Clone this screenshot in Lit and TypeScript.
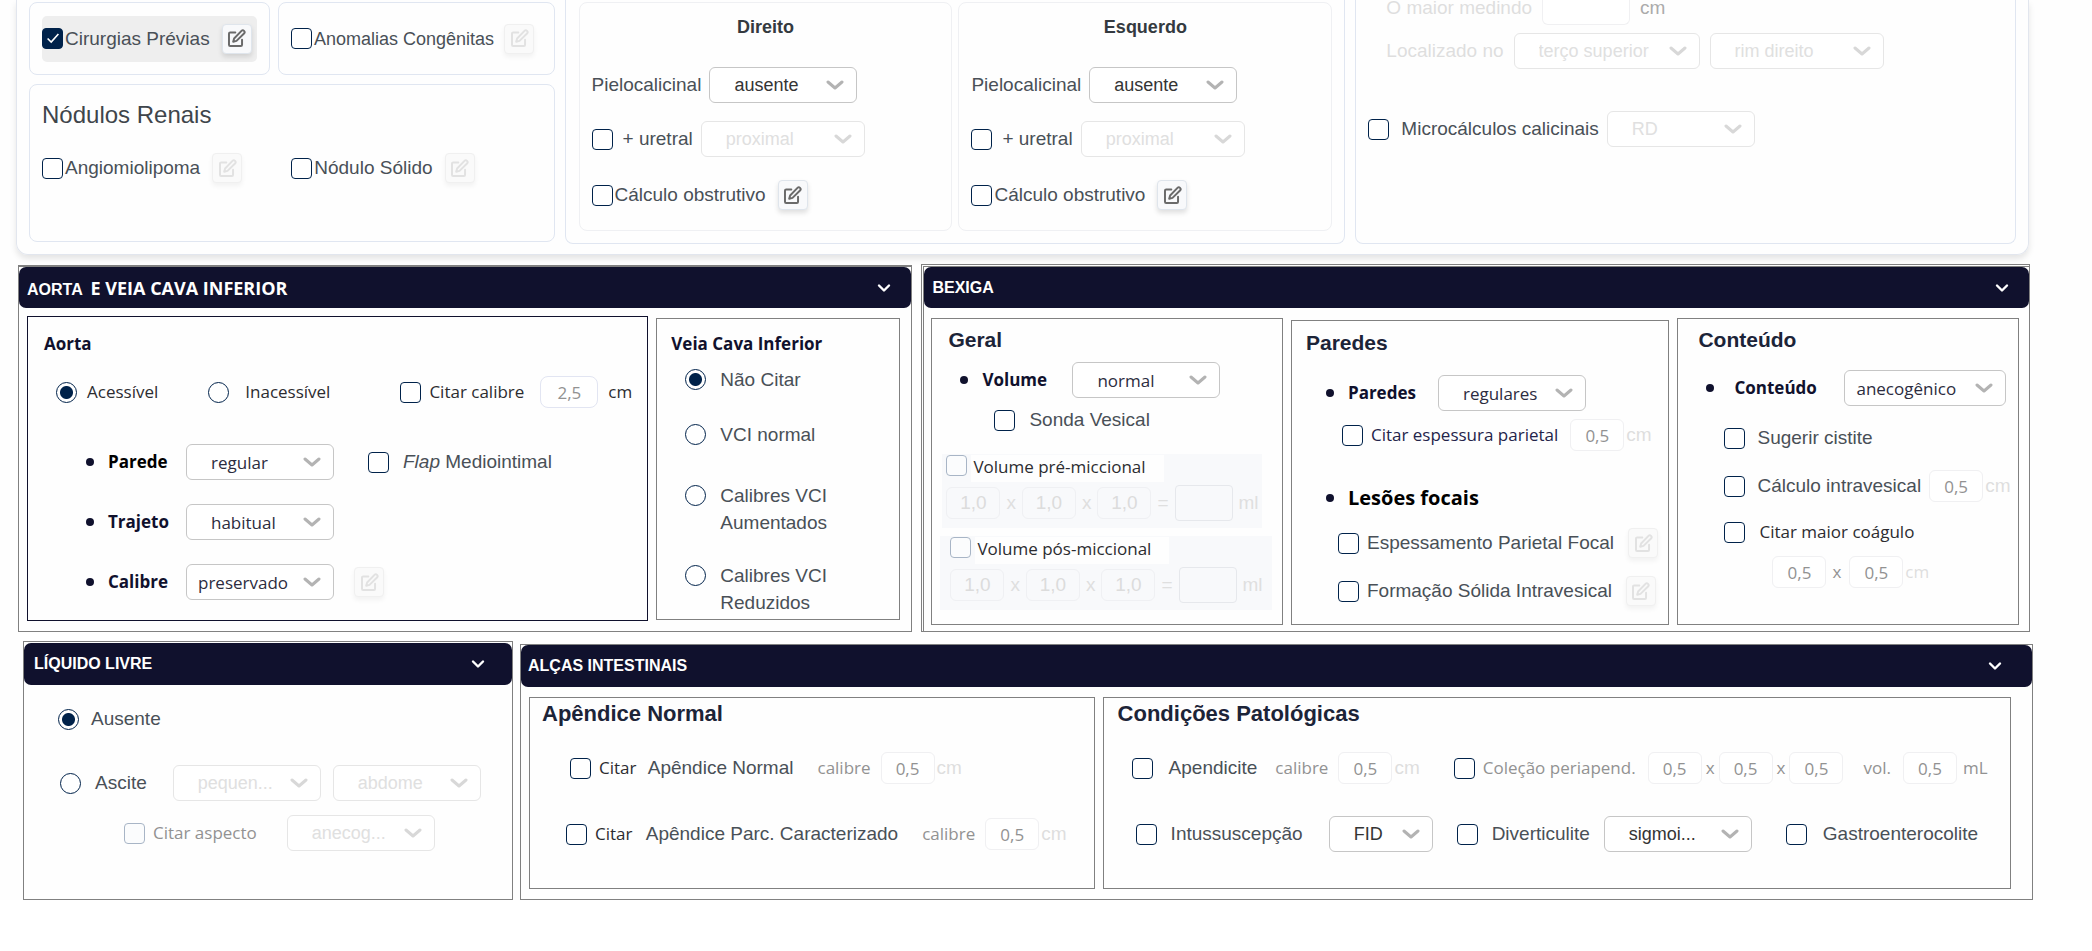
import { LitElement, html, css, svg, unsafeCSS } from "lit";
import { customElement } from "lit/decorators.js";

const steps = Array.from({ length: 50 }, (_, i) => (i + 1) * 2);
const spacing = unsafeCSS(
  steps.map((n) => `.ml-${n}{margin-left:${n}px}.mt-${n}{margin-top:${n}px}`).join("")
);

const check = (text: unknown, gap = 2, opts: { on?: boolean; off?: boolean; cls?: string } = {}) => html`
  <label class="check ${opts.cls ?? ""}">
    <input type="checkbox" ?checked=${opts.on} ?disabled=${opts.off} />
    <span class="ml-${gap}">${text}</span>
  </label>`;

const radio = (name: string, text: unknown, gap: number, on = false, cls = "") => html`
  <label class="check ${cls}">
    <input type="radio" name=${name} ?checked=${on} />
    <span class="ml-${gap}">${text}</span>
  </label>`;

const select = (value: string, label: string, cls = "", off = false) => html`
  <span class="select ${cls} ${off ? "off" : ""}">
    <select aria-label=${label} ?disabled=${off}>
      <option>${value}</option>
    </select>
    <svg viewBox="0 0 18 10" aria-hidden="true">${svg`<path d="M2 2l7 6 7-6" />`}</svg>
  </span>`;

const num = (value: string, label: string, cls = "") => html`
  <input class="num ${cls}" type="text" inputmode="decimal" aria-label=${label} .value=${value} />`;

const edit = (label: string, cls = "", off = false) => html`
  <button class="edit ${cls}" type="button" aria-label="Editar ${label}" ?disabled=${off}>
    <svg viewBox="0 0 24 24" aria-hidden="true">
      <path d="M10.5 4.5H4a1.500 1.500 0 0 0-1.500 1.500V20A1.500 1.500 0 0 0 4 21.500h13.500A1.500 1.500 0 0 0 19 20v-6.500" />
      <path d="M18.300 2.400a2.100 2.100 0 0 1 3.200 3.200L12 15l-4.200 1.200L9 12z" />
    </svg>
  </button>`;

const header = (title: unknown) => html`
  <button class="bar" type="button" aria-expanded="true">
    <span>${title}</span>
    <svg viewBox="0 0 14 10" aria-hidden="true"><path d="M2 2.500l5 5 5-5" /></svg>
  </button>`;

@customElement("app-root")
export class AppRoot extends LitElement {
  static styles = [
    css`
      :host {
        display: block;
        background: #fefefe;
        font: 19px/22px "Liberation Sans", Arial, sans-serif;
        color: #495057;
        --navy: #10112d;
        --human: "Open Sans", "Noto Sans", sans-serif;
      }
      * { box-sizing: border-box; }
      h2, h3, p { margin: 0; }
      .row { display: flex; align-items: center; height: 36px; white-space: nowrap; }
      .row.low { height: 32px; }
      .row.line { height: 20px; }
      .check { display: inline-flex; align-items: center; white-space: nowrap; }
      .human { font-family: var(--human); font-size: 17px; color: #2c2c30; }
      .ink { color: #24244a; }
      .small { font-size: 18px; }
      .gray { color: #929292; }
      .faint { color: #dedede; }

      input[type="checkbox"], input[type="radio"] {
        appearance: none;
        flex: none;
        width: 21px;
        height: 21px;
        margin: 0;
        border: 1px solid #00224a;
        border-radius: 4px;
        background: #fff;
      }
      input[type="checkbox"]:checked {
        background: #00224a url("data:image/svg+xml,%3Csvg xmlns='http://www.w3.org/2000/svg' viewBox='0 0 20 20' fill='none' stroke='white' stroke-width='1.8'%3E%3Cpath d='M4 9.500l4 4 8-9'/%3E%3C/svg%3E") center / 18px no-repeat;
      }
      input[type="checkbox"]:disabled { border-color: #a8b5c6; background: #fbfcfd; }
      input[type="radio"] { border-radius: 50%; }
      input[type="radio"]:checked {
        background: radial-gradient(circle, #00224a 0 6px, #fff 7px);
      }

      .select { display: inline-grid; align-items: center; flex: none; width: 148px; height: 36px; }
      .select > * { grid-area: 1 / 1; }
      .select select {
        appearance: none;
        width: 100%;
        height: 100%;
        padding: 0 34px 0 24px;
        border: 1px solid #c6c6c6;
        border-radius: 6px;
        background: #fff;
        font: 18px "Liberation Sans", Arial, sans-serif;
        color: #343434;
        opacity: 1;
      }
      .select svg {
        justify-self: end;
        width: 18px;
        height: 10px;
        margin-right: 13px;
        fill: none;
        stroke: #b3b3b3;
        stroke-width: 3;
        stroke-linecap: round;
        stroke-linejoin: round;
        pointer-events: none;
      }
      .select.human select { font: 17px var(--human); color: #2c2c40; }
      .select.tight select { padding-left: 11px; }
      .select.off select { border-color: #e6e6e6; color: #e0e0e0; }
      .select.off svg { stroke: #d8d8d8; }
      .select.w104 { width: 104px; }
      .select.w162 { width: 162px; }
      .select.w164 { width: 164px; }
      .select.w174 { width: 174px; }
      .select.w186 { width: 186px; }

      .num {
        flex: none;
        width: 54px;
        height: 32px;
        padding: 0;
        border: 1px solid #f0f0f2;
        border-radius: 6px;
        background: #fff;
        text-align: center;
        font: 17px var(--human);
        color: #929292;
      }
      .num.blue { width: 58px; border-color: #e2e5f2; border-radius: 8px; }
      .num.plain { font: 19px "Liberation Sans", Arial, sans-serif; }

      .edit {
        display: grid;
        place-items: center;
        flex: none;
        width: 30px;
        height: 30px;
        padding: 0;
        border: 1px solid #dfe5ec;
        border-radius: 4px;
        background: #f8f9fb;
        box-shadow: 0 3px 5px rgba(0, 0, 0, 0.12);
      }
      .edit svg {
        width: 19px;
        height: 19px;
        fill: none;
        stroke: #6a6a6a;
        stroke-width: 2.5;
        stroke-linecap: round;
        stroke-linejoin: round;
      }
      .edit:disabled { border-color: #f0f0f0; background: #fafafa; box-shadow: 0 3px 5px rgba(0, 0, 0, 0.05); }
      .edit:disabled svg { stroke: #e2e2e2; }

      /* kidneys */
      .kidneys {
        display: grid;
        grid-template-columns: 525fr 780fr 660fr;
        gap: 10px;
        margin: 0 63px 0 16px;
        padding: 0 12px 10px;
        border: 1px solid #e2e6ee;
        border-top: 0;
        border-radius: 0 0 12px 12px;
        box-shadow: 0 4px 6px rgba(0, 0, 0, 0.1);
      }
      .card { border: 1px solid #e0e6f1; border-radius: 8px; }
      .left { display: flex; flex-direction: column; gap: 9px; padding: 2px 0; }
      .pair { display: grid; grid-template-columns: 241fr 277fr; gap: 8px; }
      .pair .card { display: flex; align-items: center; height: 73px; padding: 0 12px; }
      .picked {
        display: flex;
        align-items: center;
        width: 215px;
        height: 46px;
        border-radius: 5px;
        background: #eee;
      }
      .nodules { flex: 1; padding: 17px 12px 0; }
      .nodules h3 { font-size: 24px; line-height: 26px; font-weight: 400; color: #3f454b; }
      .nodules .row { display: grid; grid-template-columns: 249fr 250fr; }
      .nodules .row > span { display: flex; align-items: center; }
      .open { border-top: 0; border-radius: 0 0 8px 8px; }
      .sides {
        display: grid;
        grid-template-columns: 1fr 1fr;
        gap: 6px;
        padding: 2px 12px 12px 13px;
      }
      .side { padding: 12px 12px 17px; border: 1px solid #eff0f3; border-radius: 8px; }
      .side h3 { font-size: 18px; line-height: 24px; text-align: center; color: #343a40; }
      .first { height: 25px; align-items: flex-start; line-height: 16px; }
      .first .num { width: 88px; height: 25px; border-top: 0; border-radius: 0 0 6px 6px; }
      .first .unit { color: #ababab; }

      /* panels */
      .band { display: grid; }
      .vessels-band { grid-template-columns: 894fr 1108fr; gap: 9px; margin: 9px 62px 0 18px; }
      .bowel-band { grid-template-columns: 490fr 1513fr; gap: 7px; margin: 9px 59px 50px 23px; }
      .panel { display: flex; flex-direction: column; border: 1px solid #808080; }
      .vessels { margin-top: 1px; border-top-width: 2px; }
      .bladder { border-top: 3px double #808080; border-left: 3px double #808080; }
      .fluid { padding-top: 1px; }
      .bowel { margin-top: 3px; }
      .bar {
        display: flex;
        align-items: center;
        justify-content: space-between;
        height: 42px;
        padding: 0 20px 0 8px;
        border: 0;
        border-radius: 7px;
        background: var(--navy);
        color: #fff;
        font: bold 16px "Liberation Sans", Arial, sans-serif;
      }
      .vessels-band .bar { height: 41px; }
      .fluid .bar { padding: 0 27px 0 10px; }
      .bowel .bar { padding: 0 30px 0 7px; }
      .bar .alt { font: bold 18px var(--human); margin-left: 4px; }
      .bar svg {
        width: 14px;
        height: 10px;
        fill: none;
        stroke: #fff;
        stroke-width: 2.4;
        stroke-linecap: round;
        stroke-linejoin: round;
      }
      .body { display: grid; flex: 1; gap: 8px; padding: 8px 11px 10px 8px; }
      .vessels .body { grid-template-columns: minmax(0, 621fr) minmax(0, 244fr); }
      .bladder .body {
        grid-template-columns: minmax(0, 352fr) minmax(0, 379fr) minmax(0, 342fr);
        padding: 10px 10px 6px 7px;
      }
      .bowel .body { grid-template-columns: 566fr 909fr; padding: 10px 21px 10px 8px; }
      .box { border: 1px solid #808080; padding-bottom: 20px; }
      .box h3 { font-size: 21px; line-height: 24px; color: #1c2438; }
      .box.aorta { border-color: var(--navy); padding-top: 15px; }
      .box.vci { margin: 2px 0 1px; padding: 13px 0 0; }
      .bladder .box { padding-top: 9px; padding-bottom: 13px; }
      .bladder .box.walls { padding-top: 10px; padding-bottom: 12px; margin-top: 2px; }
      .bowel .box { padding-top: 4px; padding-bottom: 36px; }
      .bowel .box h3 { font-size: 22px; }
      .box h3.named, .key { font-family: var(--human); font-size: 17px; font-weight: 700; color: var(--navy); }
      .key { display: flex; align-items: center; gap: 14px; }
      .key::before { content: ""; width: 8px; height: 8px; border-radius: 50%; background: var(--navy); }
      .key.w100 { width: 100px; }
      .key.w112 { width: 112px; }
      .key.w138 { width: 138px; gap: 20px; }
      .key.black { color: #000; }
      .key.big { font-size: 20px; }
      .top { display: flex; align-items: flex-start; line-height: 27px; width: max-content; }
      .top input { margin-top: 3px; }
      .volume { background: #f8f9fb; height: 74px; margin-right: 20px; padding: 1px 4px; color: #dfdfdf; }
      .volume.wide { margin-right: 10px; padding-left: 10px; }
      .volume .check { display: flex; align-items: flex-start; height: 28px; }
      .volume .check span { padding: 0 18px 3px 2px; background: #fefefe; line-height: 24px; }
      .volume .num { color: #dcdcdc; background: none; border-color: #eff0f3; }
      .volume .result { width: 58px; height: 36px; border-color: #e6e8ec; border-radius: 4px; }
      .volume .row > * + * { margin-left: 6px; }
    `,
    css`${spacing}`,
  ];

  private side(title: string) {
    return html`<div class="side">
      <h3>${title}</h3>
      <div class="row mt-28">
        <span>Pielocalicinal</span>${select("ausente", `Pielocalicinal ${title}`, "ml-8")}
      </div>
      <div class="row mt-18">
        ${check("+ uretral", 10)}${select("proximal", `Uretral ${title}`, "w164 ml-8", true)}
      </div>
      <div class="row mt-20">${check("Cálculo obstrutivo")}${edit(`cálculo ${title}`, "ml-12")}</div>
    </div>`;
  }

  private volume(title: string, cls: string) {
    return html`<div class="volume ${cls}">
      ${check(title, 4, { off: true, cls: "human" })}
      <div class="row mt-2">
        ${num("1,0", `${title} medida 1`, "plain")}<span>x</span>${num("1,0", `${title} medida 2`, "plain")}<span>x</span>
        ${num("1,0", `${title} medida 3`, "plain")}<span>=</span>${num("", `${title} total`, "result")}<span>ml</span>
      </div>
    </div>`;
  }

  private kidneys() {
    return html`<section class="kidneys">
      <div class="left">
        <div class="pair">
          <div class="card">
            <div class="picked">${check("Cirurgias Prévias", 2, { on: true })}${edit("cirurgias", "ml-12")}</div>
          </div>
          <div class="card">
            ${check("Anomalias Congênitas", 2, { cls: "small" })}${edit("anomalias", "ml-10", true)}
          </div>
        </div>
        <div class="card nodules">
          <h3>Nódulos Renais</h3>
          <div class="row mt-22">
            <span>${check("Angiomiolipoma", 2)}${edit("angiomiolipoma", "ml-12", true)}</span>
            <span>${check("Nódulo Sólido", 2)}${edit("nódulo sólido", "ml-12", true)}</span>
          </div>
        </div>
      </div>
      <div class="card open sides">${this.side("Direito")}${this.side("Esquerdo")}</div>
      <div class="card open">
        <div class="row first ml-30">
          <span class="faint">O maior medindo</span>${num("", "O maior medindo", "ml-10")}<span class="unit ml-10">cm</span>
        </div>
        <div class="row mt-8 ml-30">
          <span class="faint">Localizado no</span>${select("terço superior", "Terço", "w186 ml-10", true)}
          ${select("rim direito", "Rim", "w174 ml-10", true)}
        </div>
        <div class="row mt-42 ml-12">
          ${check("Microcálculos calicinais", 12)}${select("RD", "Microcálculos", "ml-8", true)}
        </div>
      </div>
    </section>`;
  }

  private vessels() {
    return html`<section class="panel vessels">
      ${header(html`AORTA <span class="alt">E VEIA CAVA INFERIOR</span>`)}
      <div class="body">
        <div class="box aorta">
          <h3 class="named ml-16">Aorta</h3>
          <div class="row human mt-18 ml-28">
            ${radio("aorta", "Acessível", 10, true)}${radio("aorta", "Inacessível", 16, false, "ml-50")}
            ${check("Citar calibre", 8, { cls: "ml-70" })}${num("2,5", "Calibre da aorta", "blue ml-16")}
            <span class="ml-10">cm</span>
          </div>
          <div class="row mt-34 ml-58">
            <span class="key w100 black">Parede</span>${select("regular", "Parede", "human")}
            ${check(html`<em>Flap</em> Mediointimal`, 14, { cls: "ml-34" })}
          </div>
          <div class="row mt-24 ml-58">
            <span class="key w100">Trajeto</span>${select("habitual", "Trajeto", "human")}
          </div>
          <div class="row mt-24 ml-58">
            <span class="key w100">Calibre</span>${select("preservado", "Calibre", "human tight")}
            ${edit("calibre", "ml-20", true)}
          </div>
        </div>
        <div class="box vci">
          <h3 class="named ml-14">Veia Cava Inferior</h3>
          ${radio("vci", "Não Citar", 14, true, "top mt-10 ml-28")}
          ${radio("vci", "VCI normal", 14, false, "top mt-28 ml-28")}
          ${radio("vci", html`Calibres VCI<br />Aumentados`, 14, false, "top mt-34 ml-28")}
          ${radio("vci", html`Calibres VCI<br />Reduzidos`, 14, false, "top mt-26 ml-28")}
        </div>
      </div>
    </section>`;
  }

  private bladder() {
    return html`<section class="panel bladder">
      ${header("BEXIGA")}
      <div class="body">
        <div class="box">
          <h3 class="ml-16">Geral</h3>
          <div class="row mt-10 ml-28">
            <span class="key w112">Volume</span>${select("normal", "Volume", "human")}
          </div>
          <div class="row line mt-12 ml-62">${check("Sonda Vesical", 14)}</div>
          ${this.volume("Volume pré-miccional", "mt-24 ml-10")}
          ${this.volume("Volume pós-miccional", "wide mt-8 ml-8")}
        </div>
        <div class="box walls">
          <h3 class="ml-14">Paredes</h3>
          <div class="row mt-20 ml-34">
            <span class="key w112">Paredes</span>${select("regulares", "Paredes", "human")}
          </div>
          <div class="row low mt-8 ml-50">
            ${check("Citar espessura parietal", 8, { cls: "human ink" })}${num("0,5", "Espessura parietal", "ml-12")}
            <span class="faint ml-2">cm</span>
          </div>
          <p class="key black big mt-36 ml-34">Lesões focais</p>
          <div class="row low mt-18 ml-46">
            ${check("Espessamento Parietal Focal", 8)}${edit("espessamento", "ml-14", true)}
          </div>
          <div class="row low mt-16 ml-46">
            ${check("Formação Sólida Intravesical", 8)}${edit("formação", "ml-14", true)}
          </div>
        </div>
        <div class="box">
          <h3 class="ml-20">Conteúdo</h3>
          <div class="row mt-18 ml-28">
            <span class="key w138">Conteúdo</span>${select("anecogênico", "Conteúdo", "human tight w162")}
          </div>
          <div class="row line mt-22 ml-46">${check("Sugerir cistite", 12)}</div>
          <div class="row low mt-22 ml-46">
            ${check("Cálculo intravesical", 12)}${num("0,5", "Cálculo intravesical", "ml-8")}
            <span class="faint ml-2">cm</span>
          </div>
          <div class="row line mt-20 ml-46">${check("Citar maior coágulo", 14, { cls: "human" })}</div>
          <div class="row low human gray mt-14 ml-94">
            ${num("0,5", "Coágulo medida 1")}<span class="ml-6">x</span>${num("0,5", "Coágulo medida 2", "ml-8")}
            <span class="faint ml-2">cm</span>
          </div>
        </div>
      </div>
    </section>`;
  }

  private fluid() {
    return html`<section class="panel fluid">
      ${header("LÍQUIDO LIVRE")}
      <div class="row line mt-24 ml-34">${radio("liquido", "Ausente", 12, true)}</div>
      <div class="row mt-36 ml-36">
        ${radio("liquido", "Ascite", 14)}${select("pequen...", "Quantidade", "ml-26", true)}
        ${select("abdome", "Local", "ml-12", true)}
      </div>
      <div class="row mt-14 ml-100">
        ${check("Citar aspecto", 8, { off: true, cls: "human gray" })}
        ${select("anecog...", "Aspecto", "ml-30", true)}
      </div>
    </section>`;
  }

  private bowel() {
    const cal = (label: string) => html`
      <span class="human gray ml-24">calibre</span>${num("0,5", label, "ml-10")}<span class="faint ml-2">cm</span>`;
    return html`<section class="panel bowel">
      ${header("ALÇAS INTESTINAIS")}
      <div class="body">
        <div class="box">
          <h3 class="ml-12">Apêndice Normal</h3>
          <div class="row mt-24 ml-40">
            ${check(html`<span class="human">Citar</span> <span class="ml-6">Apêndice Normal</span>`, 8)}
            ${cal("Calibre do apêndice normal")}
          </div>
          <div class="row mt-30 ml-36">
            ${check(html`<span class="human">Citar</span> <span class="ml-8">Apêndice Parc. Caracterizado</span>`, 8)}
            ${cal("Calibre do apêndice parcialmente caracterizado")}
          </div>
        </div>
        <div class="box">
          <h3 class="ml-14">Condições Patológicas</h3>
          <div class="row mt-24 ml-28">
            ${check("Apendicite", 16)}<span class="human gray ml-18">calibre</span>
            ${num("0,5", "Calibre", "ml-10")}<span class="faint ml-2">cm</span>
            ${check("Coleção periapend.", 8, { cls: "human gray ml-34" })}
            <span class="row human gray">
              ${num("0,5", "Coleção medida 1", "ml-12")}<span class="ml-4">x</span>
              ${num("0,5", "Coleção medida 2", "ml-4")}<span class="ml-4">x</span>
              ${num("0,5", "Coleção medida 3", "ml-4")}<span class="ml-20">vol.</span>
              ${num("0,5", "Volume da coleção", "ml-12")}<span class="ml-6">mL</span>
            </span>
          </div>
          <div class="row mt-30 ml-32">
            ${check("Intussuscepção", 14)}${select("FID", "Local da intussuscepção", "w104 ml-26")}
            ${check("Diverticulite", 14, { cls: "ml-24" })}${select("sigmoi...", "Local da diverticulite", "ml-14")}
            ${check("Gastroenterocolite", 16, { cls: "ml-34" })}
          </div>
        </div>
      </div>
    </section>`;
  }

  render() {
    return html`<main>
      ${this.kidneys()}
      <div class="band vessels-band">${this.vessels()}${this.bladder()}</div>
      <div class="band bowel-band">${this.fluid()}${this.bowel()}</div>
    </main>`;
  }
}
